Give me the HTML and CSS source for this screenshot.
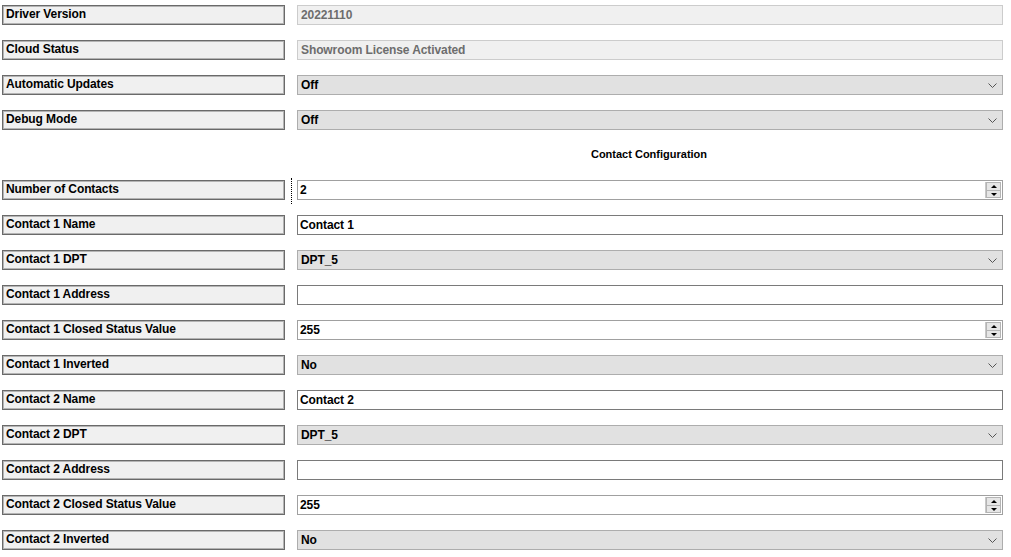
FILE: index.html
```html
<!DOCTYPE html>
<html>
<head>
<meta charset="utf-8">
<link rel="stylesheet" href="styles.css">
</head>
<body>
<div class="grid">
  <div class="row"><div class="label">Driver Version</div><div class="value disabled">20221110</div></div>
  <div class="row"><div class="label">Cloud Status</div><div class="value disabled">Showroom License Activated</div></div>
  <div class="row"><div class="label">Automatic Updates</div><div class="value combo">Off<svg class="chev" width="9" height="5" viewBox="0 0 9 5"><path d="M0.5 0.5 L4.5 4.5 L8.5 0.5" fill="none" stroke="#555" stroke-width="1"/></svg></div></div>
  <div class="row"><div class="label">Debug Mode</div><div class="value combo">Off<svg class="chev" width="9" height="5" viewBox="0 0 9 5"><path d="M0.5 0.5 L4.5 4.5 L8.5 0.5" fill="none" stroke="#555" stroke-width="1"/></svg></div></div>
  <div class="row heading">Contact Configuration</div>
  <div class="row"><div class="label">Number of Contacts</div><div class="focus"></div><div class="value spin">2<div class="spinbtn"><span class="up"></span><span class="down"></span></div></div></div>
  <div class="row"><div class="label">Contact 1 Name</div><div class="value text">Contact 1</div></div>
  <div class="row"><div class="label">Contact 1 DPT</div><div class="value combo">DPT_5<svg class="chev" width="9" height="5" viewBox="0 0 9 5"><path d="M0.5 0.5 L4.5 4.5 L8.5 0.5" fill="none" stroke="#555" stroke-width="1"/></svg></div></div>
  <div class="row"><div class="label">Contact 1 Address</div><div class="value text"></div></div>
  <div class="row"><div class="label">Contact 1 Closed Status Value</div><div class="value spin">255<div class="spinbtn"><span class="up"></span><span class="down"></span></div></div></div>
  <div class="row"><div class="label">Contact 1 Inverted</div><div class="value combo">No<svg class="chev" width="9" height="5" viewBox="0 0 9 5"><path d="M0.5 0.5 L4.5 4.5 L8.5 0.5" fill="none" stroke="#555" stroke-width="1"/></svg></div></div>
  <div class="row"><div class="label">Contact 2 Name</div><div class="value text">Contact 2</div></div>
  <div class="row"><div class="label">Contact 2 DPT</div><div class="value combo">DPT_5<svg class="chev" width="9" height="5" viewBox="0 0 9 5"><path d="M0.5 0.5 L4.5 4.5 L8.5 0.5" fill="none" stroke="#555" stroke-width="1"/></svg></div></div>
  <div class="row"><div class="label">Contact 2 Address</div><div class="value text"></div></div>
  <div class="row"><div class="label">Contact 2 Closed Status Value</div><div class="value spin">255<div class="spinbtn"><span class="up"></span><span class="down"></span></div></div></div>
  <div class="row"><div class="label">Contact 2 Inverted</div><div class="value combo">No<svg class="chev" width="9" height="5" viewBox="0 0 9 5"><path d="M0.5 0.5 L4.5 4.5 L8.5 0.5" fill="none" stroke="#555" stroke-width="1"/></svg></div></div>
</div>
</body>
</html>
```

FILE: styles.css
```css
html, body {
  margin: 0;
  padding: 0;
  background: #ffffff;
  overflow: hidden;
}
body {
  font-family: "Liberation Sans", Arial, sans-serif;
  font-size: 12px;
  font-weight: bold;
  color: #000;
}
.grid {
  display: flex;
  flex-direction: column;
  gap: 15px;
  padding: 5px 8px 0 2px;
}
.row {
  box-sizing: border-box;
  display: flex;
  align-items: stretch;
  height: 20px;
  position: relative;
}
.label {
  box-sizing: border-box;
  width: 283px;
  flex: none;
  background: #f0f0f0;
  border: 1px solid #6a6a6a;
  box-shadow: inset 0 0 0 1px #b4b4b4;
  padding: 0 0 2px 3px;
  display: flex;
  align-items: center;
  letter-spacing: -0.1px;
}
.value {
  box-sizing: border-box;
  margin-left: 12px;
  flex: 1;
  display: flex;
  align-items: center;
  padding: 0 0 0 3px;
  position: relative;
  letter-spacing: -0.1px;
}
.disabled {
  background: #f0f0f0;
  border: 1px solid #cccccc;
  color: #6d6d6d;
}
.combo {
  background: #e1e1e1;
  border: 1px solid #adadad;
}
.text {
  background: #ffffff;
  border: 1px solid #7a7a7a;
  padding-left: 2px;
}
.spin {
  background: #ffffff;
  border: 1px solid #a0a0a0;
  padding-left: 2px;
}
.chev {
  position: absolute;
  right: 5px;
  top: 7px;
}
.spinbtn {
  position: absolute;
  right: 1px;
  top: 1px;
  bottom: 1px;
  width: 15px;
  display: flex;
  flex-direction: column;
  border-left: 1px solid #c8c8c8;
}
.spinbtn span {
  flex: 1;
  background: #e6e6e6;
  border: 1px solid #b4b4b4;
  position: relative;
}
.spinbtn .up {
  border-bottom: none;
}
.spinbtn .up::after,
.spinbtn .down::after {
  content: "";
  position: absolute;
  left: 4px;
  width: 0;
  height: 0;
  border-left: 3px solid transparent;
  border-right: 3px solid transparent;
}
.spinbtn .up::after {
  top: 2px;
  border-bottom: 3px solid #000;
}
.spinbtn .down::after {
  top: 2px;
  border-top: 3px solid #000;
}
.focus {
  position: absolute;
  left: 289px;
  top: -2px;
  height: 26px;
  width: 1px;
  border-left: 1px dotted #000;
}
.heading {
  justify-content: center;
  align-items: center;
  padding-left: 293px;
  padding-bottom: 2px;
  font-size: 11px;
}
```
